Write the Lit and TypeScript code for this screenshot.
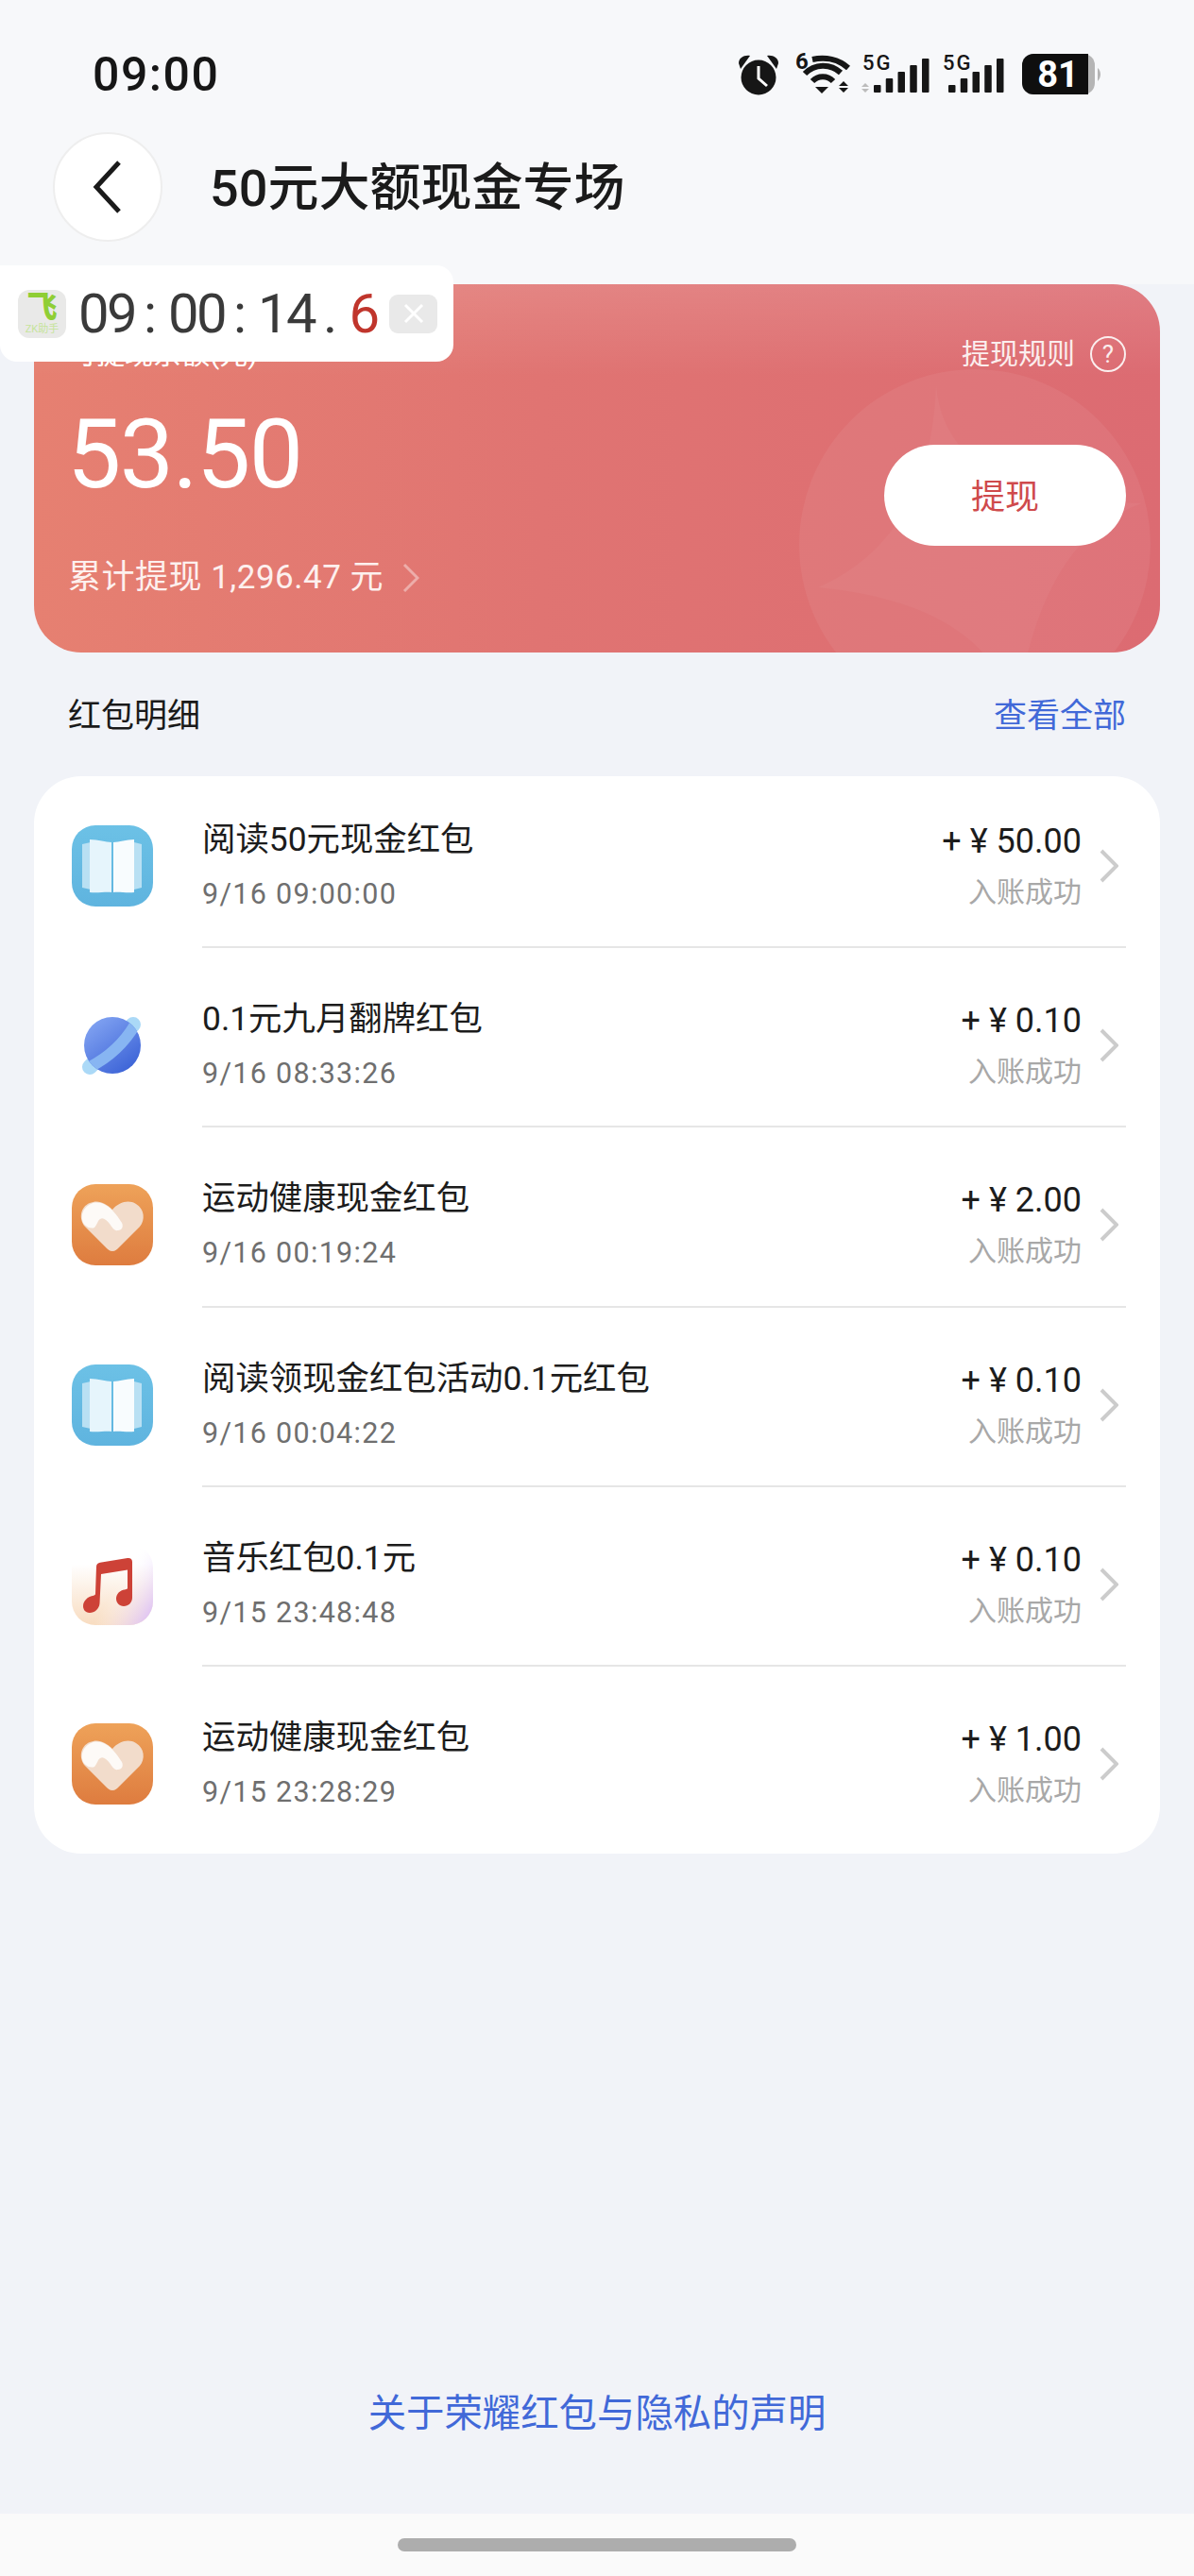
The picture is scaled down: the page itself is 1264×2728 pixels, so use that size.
import { LitElement, html, css, svg } from "lit";
import { customElement } from "lit/decorators.js";

type Kind = "book" | "planet" | "heart" | "music";
interface Row { kind: Kind; title: string; date: string; amount: string; }

const ROWS: Row[] = [
  { kind: "book", title: "阅读50元现金红包", date: "9/16 09:00:00", amount: "50.00" },
  { kind: "planet", title: "0.1元九月翻牌红包", date: "9/16 08:33:26", amount: "0.10" },
  { kind: "heart", title: "运动健康现金红包", date: "9/16 00:19:24", amount: "2.00" },
  { kind: "book", title: "阅读领现金红包活动0.1元红包", date: "9/16 00:04:22", amount: "0.10" },
  { kind: "music", title: "音乐红包0.1元", date: "9/15 23:48:48", amount: "0.10" },
  { kind: "heart", title: "运动健康现金红包", date: "9/15 23:28:29", amount: "1.00" },
];

const bars = (x0: number) => [45, 38, 31, 24, 17].map((top, i) =>
  svg`<rect x=${x0 + i * 12.75} y=${top} width="7.5" height=${53 - top} rx="1" fill="#161616"/>`);

const statusIcons = html`<svg class="status-icons" viewBox="0 0 410 65" width="410" height="65">
  <g fill="#161616">
    <circle cx="33" cy="37" r="18.500"/>
    <path d="M12 22 C12 16 18 13 24 14 L14 28 Z"/>
    <path d="M54 22 C54 16 48 13 42 14 L52 28 Z"/>
    <text x="72" y="28" font-family="Roboto" font-weight="700" font-size="24">6</text>
    <text x="143" y="29" font-family="Roboto" font-weight="500" font-size="22" letter-spacing="2">5G</text>
    <text x="228" y="29" font-family="Roboto" font-weight="500" font-size="22" letter-spacing="2">5G</text>
    <path d="M93 47 L107 47 L100 54 Z"/>
    <path d="M123 41 L128 46 L118 46 Z M118 48 L128 48 L123 53 Z"/>
  </g>
  <path d="M33 25 V38 L42 46" fill="none" stroke="#fff" stroke-width="3"/>
  <g fill="none" stroke="#161616" stroke-width="6">
    <path d="M90 41 A15 15 0 0 1 112 41"/>
    <path d="M82 33 A27 27 0 0 1 120 32"/>
    <path d="M90 18 C104 15 118 18 128 27"/>
  </g>
  <path d="M146 43 L150 47 L142 47 Z M142 49 L150 49 L146 53 Z" fill="#bcbcbc"/>
  ${bars(155)}
  ${bars(234)}
  <rect x="312" y="12" width="77" height="43" rx="12" fill="#b5b5b5"/>
  <path d="M392 27 C396 30 396 37 392 41 Z" fill="#b5b5b5"/>
  <path d="M324 12 H382 V55 H324 A12 12 0 0 1 312 43 V24 A12 12 0 0 1 324 12 Z" fill="#0f0f0f"/>
  <text x="350" y="47" text-anchor="middle" font-family="Roboto" font-weight="700" font-size="38" fill="#fff">81</text>
</svg>`;

const icons: Record<Kind, unknown> = {
  book: html`<svg class="app-icon" viewBox="0 0 86 86">
    <defs><linearGradient id="bk" x1="0" y1="0" x2="0" y2="1"><stop offset="0" stop-color="#6cc1e6"/><stop offset="1" stop-color="#5fb4df"/></linearGradient></defs>
    <rect width="86" height="86" rx="25" fill="url(#bk)"/>
    <path d="M11 20 L20 18 V68 L11 66 Z" fill="#b9e0f3"/>
    <path d="M66 18 L74 20 V66 L66 68 Z" fill="#b9e0f3"/>
    <path d="M19 15 C28 15 36 18 42 18 V71 C36 70 28 72 19 71 Z" fill="#e6f5fc"/>
    <path d="M44 18 C50 18 58 15 66 15 V71 C58 72 50 70 44 71 Z" fill="#f8fcfe"/>
  </svg>`,
  planet: html`<svg class="app-icon" viewBox="0 0 86 86">
    <defs>
      <linearGradient id="pl" x1="0.2" y1="0.1" x2="0.8" y2="0.9"><stop offset="0" stop-color="#7d9ff0"/><stop offset="1" stop-color="#3f66d8"/></linearGradient>
      <clipPath id="plc"><circle cx="43" cy="43" r="30"/></clipPath>
    </defs>
    <path d="M65 21 L19 66" stroke="#abd9f7" stroke-width="16" stroke-linecap="round" fill="none"/>
    <circle cx="43" cy="43" r="30" fill="url(#pl)"/>
    <path d="M67 21 Q50 50 19 66" stroke="#87b5f2" stroke-width="12" fill="none" clip-path="url(#plc)"/>
  </svg>`,
  heart: html`<svg class="app-icon" viewBox="0 0 86 86">
    <defs><linearGradient id="ht" x1="0" y1="0" x2="0" y2="1"><stop offset="0" stop-color="#eea259"/><stop offset="1" stop-color="#de7c3f"/></linearGradient></defs>
    <rect width="86" height="86" rx="25" fill="url(#ht)"/>
    <path d="M43 71 C40 71 38 69 36 67 L14 45 C7 37 9 24 19 20 C28 16 36 20 43 27 C50 19 60 16 68 21 C77 26 78 38 72 45 L50 67 C48 69 46 71 43 71 Z" fill="#f2dccb"/>
    <path d="M11 38 C9 26 20 17 31 20 C41 23 48 33 53 41 C55 45 53 49 49 49 C45 50 43 46 40 42 C37 38 33 35 30 37 C27 39 27 43 24 46 C19 48 12 44 11 38 Z" fill="#fdfaf7"/>
  </svg>`,
  music: html`<svg class="app-icon" viewBox="0 0 86 86">
    <defs>
      <linearGradient id="ms1" x1="0" y1="0" x2="0" y2="1"><stop offset="0.25" stop-color="#fff"/><stop offset="1" stop-color="#f8dcc0"/></linearGradient>
      <linearGradient id="ms2" x1="0" y1="0.4" x2="1" y2="1"><stop offset="0.45" stop-color="#fff" stop-opacity="0"/><stop offset="1" stop-color="#d5b4fa"/></linearGradient>
    </defs>
    <rect width="86" height="86" rx="25" fill="url(#ms1)"/>
    <rect width="86" height="86" rx="25" fill="url(#ms2)"/>
    <path d="M26 24 C26 21.500 28 20 30 19.700 L59 15 C62 14.600 64 16 64 19 V57 C64 62 60 66 55 66 C50 66 47 62 47 58 C47 53 51 49 56 48.500 C57 48.400 58.500 48 59 47 V27.500 L31 32 L29.500 63 C29 69 24 73 19 73 C14 73 12 69 12 66 C12 60 17 56 22 55 C23.500 54.700 25 54 25 53 Z" fill="#cd4237"/>
  </svg>`,
};

@customElement("app-root")
export class AppRoot extends LitElement {
  static styles = css`
    :host {
      display: flex;
      flex-direction: column;
      position: relative;
      width: 1264px;
      height: 2728px;
      overflow: hidden;
      background: #f1f3f8;
      color: #1a1a1a;
      font-family: Roboto, "Noto Sans CJK SC", sans-serif;
    }
    .top {
      height: 301px;
      background: #f7f8fa;
      display: flex;
      flex-direction: column;
      flex: none;
    }
    .status {
      display: flex;
      justify-content: space-between;
      align-items: flex-start;
      padding: 45px 84px 0 98px;
      height: 65px;
    }
    .status-time {
      font-size: 50px;
      line-height: 68px;
      font-weight: 500;
      letter-spacing: 1.5px;
      color: #161616;
    }
    .status-icons { display: block; }
    .header {
      display: flex;
      align-items: center;
      gap: 50px;
      margin: 30px 0 0 56px;
    }
    .back {
      width: 116px;
      height: 116px;
      box-sizing: border-box;
      border-radius: 50%;
      background: #fff;
      border: 2px solid #eeeeee;
      display: flex;
      align-items: center;
      justify-content: center;
    }
    .title { font-size: 54px; line-height: 76px; font-weight: 500; margin-top: 4px; color: #1b1b1b; }

    .chip {
      position: absolute;
      left: 0;
      top: 281px;
      width: 480px;
      height: 102px;
      background: #fff;
      border-radius: 0 18px 18px 18px;
      z-index: 2;
      display: flex;
      align-items: center;
    }
    .chip-logo {
      width: 51px;
      height: 51px;
      margin-left: 19px;
      flex: none;
      border-radius: 12px;
      background: #e9e9e8;
      display: flex;
      flex-direction: column;
      align-items: center;
      color: #8fce35;
      overflow: hidden;
    }
    .chip-logo b { font-size: 32px; line-height: 36px; font-weight: 900; }
    .chip-logo i { font-style: normal; font-size: 11px; line-height: 12px; color: #c6e49b; white-space: nowrap; }
    .clock {
      display: flex;
      font-size: 58px;
      line-height: 68px;
      font-weight: 400;
      color: #3a3a3a;
      margin-left: 13px;
      width: 316px;
      flex: none;
      letter-spacing: -2.600px;
    }
    .clock .sep { margin: 0 12px 0 9px; letter-spacing: 0; }
    .clock .red { color: #c0352c; }
    .chip-close {
      width: 51px;
      height: 41px;
      flex: none;
      border-radius: 9px;
      background: #e9e9e9;
      margin-left: 13px;
      display: flex;
      align-items: center;
      justify-content: center;
    }

    .balance {
      position: relative;
      flex: none;
      margin: 0 36px;
      height: 390px;
      border-radius: 50px;
      overflow: hidden;
      background:
        linear-gradient(180deg, rgba(255, 255, 255, 0.12), rgba(255, 255, 255, 0) 25%),
        linear-gradient(90deg, #e68071 0%, #e07472 45%, #dc6b72 100%);
      display: flex;
      justify-content: space-between;
      color: #fff;
    }
    .decor { position: absolute; left: 0; top: 0; }
    .bal-left, .bal-right { position: relative; display: flex; flex-direction: column; }
    .bal-left { padding: 52px 0 0 36px; }
    .bal-label { font-size: 30px; line-height: 44px; }
    .bal-amount {
      font-size: 102px;
      line-height: 100px;
      font-weight: 400;
      margin: 34px 0 0 -1px;
      letter-spacing: -1.500px;
    }
    .bal-total {
      display: flex;
      align-items: center;
      font-size: 35px;
      line-height: 48px;
      margin-top: 57px;
      color: #fdf0ee;
      gap: 20px;
      letter-spacing: 0.500px;
    }
    .bal-right { align-items: flex-end; padding: 54px 36px 0 0; }
    .rules { display: flex; align-items: center; gap: 16px; font-size: 30px; line-height: 40px; color: #fbeeee; }
    .rule-q {
      width: 38px;
      height: 38px;
      box-sizing: border-box;
      border: 2.500px solid #fbeeee;
      border-radius: 50%;
      display: flex;
      align-items: center;
      justify-content: center;
      font-size: 26px;
      line-height: 1;
    }
    .withdraw {
      margin-top: 76px;
      width: 256px;
      height: 107px;
      border-radius: 54px;
      background: #fff;
      color: #cf4a4c;
      font-size: 36px;
      padding-bottom: 4px;
      box-sizing: border-box;
      display: flex;
      align-items: center;
      justify-content: center;
    }

    .section {
      display: flex;
      justify-content: space-between;
      padding: 0 72px;
      margin-top: 43px;
      font-size: 35px;
      line-height: 50px;
    }
    .section a { color: #4169d8; }

    .list {
      margin: 38px 36px 0;
      background: #fff;
      border-radius: 50px;
    }
    .row {
      box-sizing: border-box;
      display: flex;
      height: 190.25px;
      padding: 60px 36px 0 40px;
    }
    .row.first { height: 182px; padding-top: 52px; }
    .row.last { height: 198px; }
    .app-icon { display: block; width: 86px; height: 86px; flex: none; }
    .body {
      flex: 1;
      display: flex;
      justify-content: space-between;
      border-bottom: 2px solid #e6e6e6;
      margin-left: 52px;
      margin-top: -5px;
    }
    .row.last .body { border-bottom: none; }
    .name { font-size: 35.400px; line-height: 40px; color: #1c1c1c; }
    .date { font-size: 30.500px; line-height: 40px; color: #6f6f6f; margin-top: 18px; letter-spacing: 1.300px; }
    .right { display: flex; align-items: flex-start; padding-top: 2px; }
    .col { display: flex; flex-direction: column; align-items: flex-end; }
    .money { display: flex; gap: 9px; font-size: 36px; line-height: 40px; color: #1c1c1c; }
    .state { font-size: 30px; line-height: 40px; color: #a8a8a8; margin-top: 14px; }
    .chev { margin: 28px 8px 0 19px; display: block; }

    .spacer { flex: 1; }
    .notice {
      text-align: center;
      font-size: 40.400px;
      line-height: 60px;
      color: #4169d8;
      margin-bottom: 75px;
    }
    .home {
      flex: none;
      height: 66px;
      background: #fafafa;
      display: flex;
      justify-content: center;
      padding-top: 26px;
      box-sizing: border-box;
    }
    .home div { width: 422px; height: 14px; border-radius: 7px; background: #adadad; }
  `;

  private renderRow(r: Row, i: number) {
    const cls = `row${i === 0 ? " first" : ""}${i === ROWS.length - 1 ? " last" : ""}`;
    return html`<div class=${cls}>
      <div>${icons[r.kind]}</div>
      <div class="body">
        <div>
          <div class="name">${r.title}</div>
          <div class="date">${r.date}</div>
        </div>
        <div class="right">
          <div class="col">
            <div class="money"><span>+</span><span>¥</span><span>${r.amount}</span></div>
            <div class="state">入账成功</div>
          </div>
          <svg class="chev" width="20" height="36" viewBox="0 0 20 36"><path d="M2 2 L18 18 L2 34" fill="none" stroke="#cccccc" stroke-width="4"/></svg>
        </div>
      </div>
    </div>`;
  }

  render() {
    return html`
      <div class="top">
        <div class="status">
          <div class="status-time">09:00</div>
          ${statusIcons}
        </div>
        <div class="header">
          <div class="back">
            <svg width="32" height="58" viewBox="0 0 32 58"><path d="M28 3 L4 29 L28 55" fill="none" stroke="#1a1a1a" stroke-width="5"/></svg>
          </div>
          <div class="title">50元大额现金专场</div>
        </div>
      </div>

      <div class="chip">
        <div class="chip-logo"><b>飞</b><i>ZK助手</i></div>
        <div class="clock">
          <span>09</span><span class="sep">:</span><span>00</span><span class="sep">:</span><span>14</span><span class="sep">.</span><span class="red">6</span>
        </div>
        <div class="chip-close">
          <svg width="22" height="22" viewBox="0 0 22 22"><path d="M2 2 L20 20 M20 2 L2 20" stroke="#fff" stroke-width="3"/></svg>
        </div>
      </div>

      <div class="balance">
        <svg class="decor" width="1192" height="390" viewBox="36 301 1192 390">
          <circle cx="1032" cy="577" r="186" fill="#fff" fill-opacity="0.06"/>
          <path d="M991 407 Q1000 530 1209 533 Q1100 570 1075 760 Q1050 640 866 622 Q985 570 991 407 Z" fill="#fff" fill-opacity="0.04"/>
        </svg>
        <div class="bal-left">
          <div class="bal-label">可提现余额(元)</div>
          <div class="bal-amount">53.50</div>
          <div class="bal-total">
            <span>累计提现 1,296.47 元</span>
            <svg width="18" height="32" viewBox="0 0 18 32"><path d="M2 2 L16 16 L2 30" fill="none" stroke="#fff" stroke-opacity="0.4" stroke-width="3"/></svg>
          </div>
        </div>
        <div class="bal-right">
          <div class="rules"><span>提现规则</span><span class="rule-q">?</span></div>
          <div class="withdraw">提现</div>
        </div>
      </div>

      <div class="section"><span>红包明细</span><a>查看全部</a></div>

      <div class="list">${ROWS.map((r, i) => this.renderRow(r, i))}</div>

      <div class="spacer"></div>
      <div class="notice">关于荣耀红包与隐私的声明</div>
      <div class="home"><div></div></div>
    `;
  }
}
